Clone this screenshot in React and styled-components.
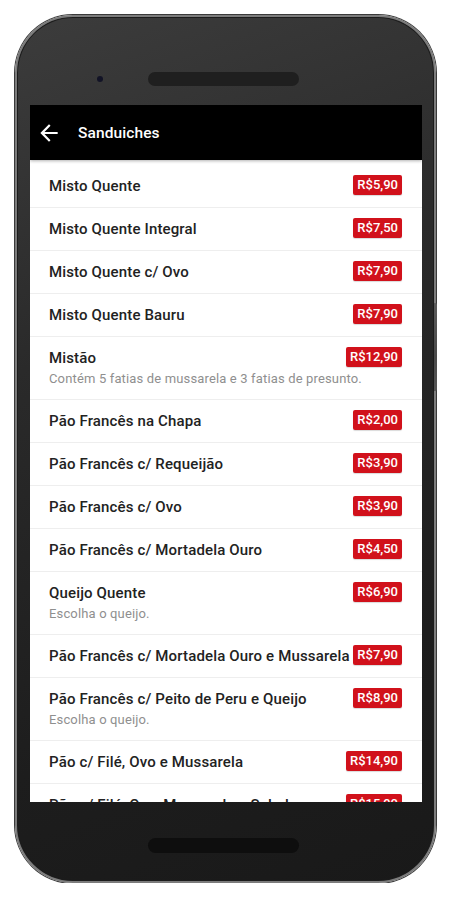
import React from 'react';
import styled, { createGlobalStyle } from 'styled-components';

const GlobalStyle = createGlobalStyle`
  html, body {
    margin: 0;
    padding: 0;
    background: #ffffff;
    font-family: Roboto, "Noto Sans", "Liberation Sans", sans-serif;
  }
`;

const Page = styled.div`
  padding: 15px 0 0 15px;
`;

const Phone = styled.div`
  position: relative;
  width: 421px;
  height: 868px;
  box-sizing: border-box;
  border-radius: 58px;
  border: 2px solid #7c7c7c;
  box-shadow: 0 0 0 1px #3a3a3a, inset 0 0 0 1px #1c1c1c;
  background: linear-gradient(160deg, #3c3c3c 0%, #2a2a2a 35%, #1d1d1d 75%, #191919 100%);
  display: flex;
  flex-direction: column;

  &::after {
    content: '';
    position: absolute;
    right: -3px;
    top: 286px;
    width: 3px;
    height: 88px;
    border-radius: 0 2px 2px 0;
    background: linear-gradient(180deg, #5a5a5a, #4a4a4a 60%, #555);
  }
`;

const TopBezel = styled.div`
  height: 88px;
  box-sizing: border-box;
  padding: 36px 0 0 80px;
  display: flex;
  align-items: center;
  gap: 45px;
  align-self: flex-start;
`;

const Camera = styled.div`
  width: 6px;
  height: 6px;
  border-radius: 50%;
  background: #121326;
`;

const Bar = styled.div`
  width: 151px;
  height: ${p => p.$h}px;
  border-radius: 8px;
  background: ${p => p.$c};
`;

const Screen = styled.div`
  margin-left: 13px;
  width: 392px;
  height: 697px;
  background: #ffffff;
  overflow: hidden;
  display: flex;
  flex-direction: column;
`;

const AppBar = styled.div`
  height: 55px;
  flex-shrink: 0;
  background: #000000;
  display: flex;
  align-items: center;
  padding-left: 6px;
  gap: 16px;
  box-shadow: 0 1px 3px rgba(0, 0, 0, 0.3);
  position: relative;
  z-index: 1;
`;

const Title = styled.div`
  color: #ffffff;
  font-size: 15.5px;
  font-weight: 500;
  letter-spacing: 0.1px;
`;

const List = styled.div`
  padding-top: 5px;
`;

const Row = styled.div`
  display: grid;
  grid-template-columns: 1fr auto;
  align-items: start;
  column-gap: 2px;
  row-gap: 4px;
  padding: 12px 20px 12px 19px;
  border-bottom: 1px solid #eeeeee;
`;

const Name = styled.div`
  font-size: 15px;
  font-weight: 500;
  letter-spacing: 0.15px;
  line-height: 18px;
  color: #222222;
  white-space: nowrap;
`;

const Desc = styled.div`
  grid-column: 1 / -1;
  font-size: 13px;
  letter-spacing: 0.15px;
  line-height: 16px;
  color: #8f8f8f;
  white-space: nowrap;
`;

const Price = styled.div`
  margin-top: -2px;
  height: 20px;
  line-height: 20px;
  padding: 0 4px;
  border-radius: 2px;
  background: #d1111b;
  color: #ffffff;
  font-size: 13px;
  font-weight: 500;
  box-shadow: 0 1px 1px rgba(0, 0, 0, 0.15);
`;

const BottomBezel = styled.div`
  padding: 36px 0 0 131px;
`;

const BackArrow = () => (
  <svg width="26" height="26" viewBox="0 0 24 24" fill="#ffffff">
    <path d="M20 11H7.83l5.59-5.59L12 4l-8 8 8 8 1.41-1.41L7.83 13H20v-2z" />
  </svg>
);

const items = [
  { name: 'Misto Quente', price: 'R$5,90' },
  { name: 'Misto Quente Integral', price: 'R$7,50' },
  { name: 'Misto Quente c/ Ovo', price: 'R$7,90' },
  { name: 'Misto Quente Bauru', price: 'R$7,90' },
  { name: 'Mistão', price: 'R$12,90', desc: 'Contém 5 fatias de mussarela e 3 fatias de presunto.' },
  { name: 'Pão Francês na Chapa', price: 'R$2,00' },
  { name: 'Pão Francês c/ Requeijão', price: 'R$3,90' },
  { name: 'Pão Francês c/ Ovo', price: 'R$3,90' },
  { name: 'Pão Francês c/ Mortadela Ouro', price: 'R$4,50' },
  { name: 'Queijo Quente', price: 'R$6,90', desc: 'Escolha o queijo.' },
  { name: 'Pão Francês c/ Mortadela Ouro e Mussarela', price: 'R$7,90' },
  { name: 'Pão Francês c/ Peito de Peru e Queijo', price: 'R$8,90', desc: 'Escolha o queijo.' },
  { name: 'Pão c/ Filé, Ovo e Mussarela', price: 'R$14,90' },
  { name: 'Pão c/ Filé, Ovo, Mussarela e Salada', price: 'R$15,90' },
];

export default function App() {
  return (
    <Page>
      <GlobalStyle />
      <Phone>
        <TopBezel>
          <Camera />
          <Bar $h={14} $c="#1f1f1f" />
        </TopBezel>
        <Screen>
          <AppBar>
            <BackArrow />
            <Title>Sanduiches</Title>
          </AppBar>
          <List>
            {items.map(it => (
              <Row key={it.name}>
                <Name>{it.name}</Name>
                <Price>{it.price}</Price>
                {it.desc && <Desc>{it.desc}</Desc>}
              </Row>
            ))}
          </List>
        </Screen>
        <BottomBezel>
          <Bar $h={15} $c="#0e0e0e" />
        </BottomBezel>
      </Phone>
    </Page>
  );
}
